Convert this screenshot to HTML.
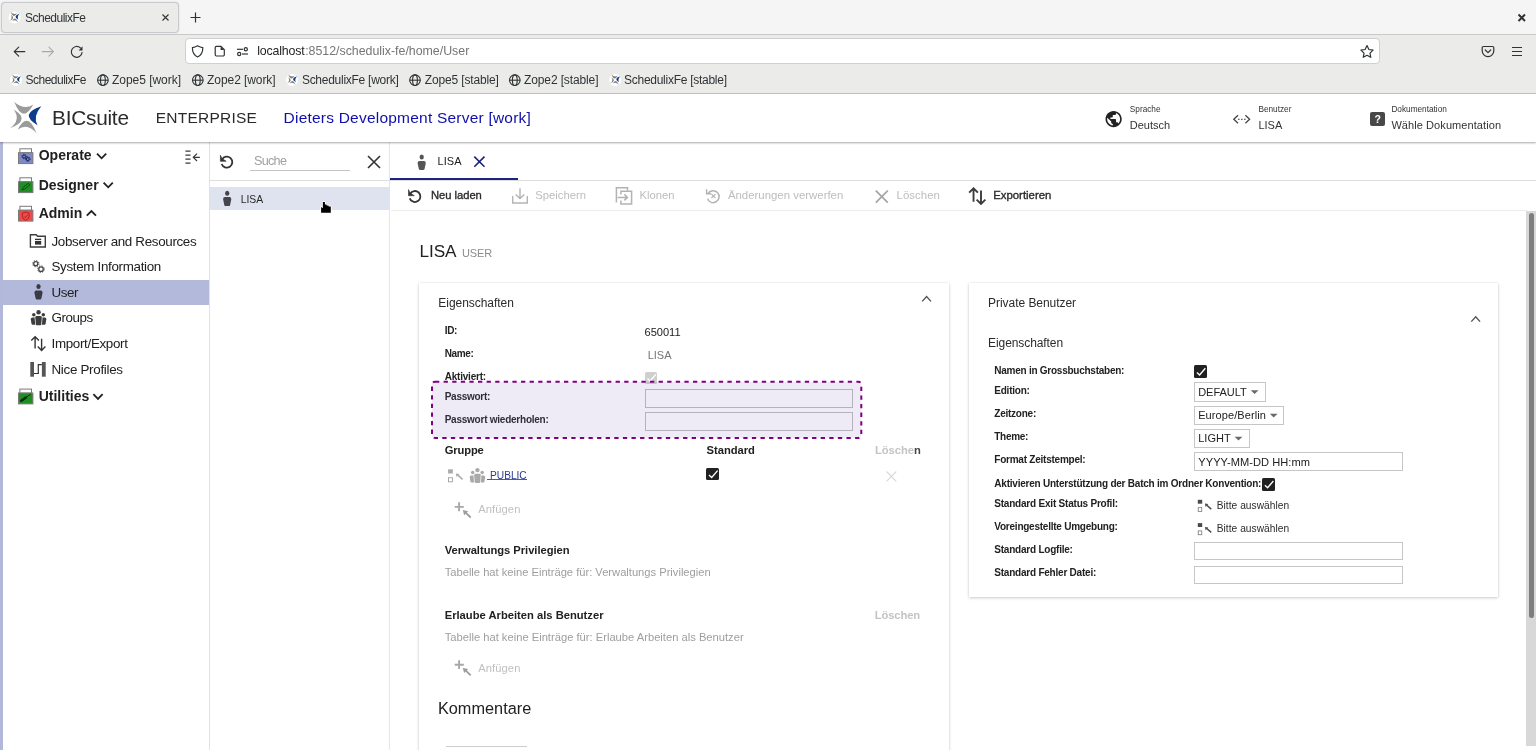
<!DOCTYPE html>
<html>
<head>
<meta charset="utf-8">
<title>SchedulixFe</title>
<style>
*{box-sizing:border-box;margin:0;padding:0}
html,body{width:1536px;height:750px;overflow:hidden;background:#fff}
body{font-family:"Liberation Sans",sans-serif;color:#212121;position:relative}
.t{position:absolute;white-space:pre;line-height:1}
.b{position:absolute}
#root{position:absolute;left:0;top:0;width:1536px;height:750px;overflow:hidden;will-change:transform}
svg.ov{position:absolute;left:0;top:0;width:1536px;height:750px;overflow:visible}
a{color:inherit}
</style>
</head>
<body>
<div id="root">
<!-- boxes -->
<div class="b" style="left:0px;top:0px;width:1536px;height:35px;background:#f5f5f5"></div>
<div class="b" style="left:0px;top:34px;width:1536px;height:1px;background:#c9c9c9"></div>
<div class="b" style="left:1px;top:2px;width:178px;height:30.5px;background:#ebebea;border:1px solid #c9c9ce;border-radius:4px;box-shadow:0 0 1.5px rgba(0,0,20,.18)"></div>
<div class="b" style="left:0px;top:35px;width:1536px;height:59px;background:#ebebea"></div>
<div class="b" style="left:0px;top:93px;width:1536px;height:1px;background:#c4c4c4"></div>
<div class="b" style="left:185px;top:38px;width:1195px;height:26px;background:#fff;border:1px solid #d0d0d0;border-radius:4px"></div>
<div class="b" style="left:0px;top:142px;width:3px;height:608px;background:#b2b8da"></div>
<div class="b" style="left:209px;top:142px;width:1px;height:608px;background:#e2e2e2"></div>
<div class="b" style="left:3px;top:279.5px;width:206px;height:25.2px;background:#b3b9da"></div>
<div class="b" style="left:389px;top:142px;width:1px;height:608px;background:#e6e6e6"></div>
<div class="b" style="left:210px;top:180px;width:1326px;height:1px;background:#dedede"></div>
<div class="b" style="left:210px;top:187.3px;width:180px;height:22.3px;background:#dfe3ef"></div>
<div class="b" style="left:249.8px;top:170px;width:100px;height:1px;background:#c4c4c4"></div>
<div class="b" style="left:390px;top:178px;width:128px;height:2.4px;background:#1a237e"></div>
<div class="b" style="left:391px;top:210px;width:1136px;height:1px;background:#ececec"></div>
<div class="b" style="left:1526.3px;top:210.5px;width:9.7px;height:535.5px;background:#d8d8d8"></div>
<div class="b" style="left:1528.6px;top:212.5px;width:5.2px;height:405.4px;background:#7d7d7d;border-radius:3px"></div>
<div class="b" style="left:0px;top:94px;width:1536px;height:48px;background:#fff;box-shadow:0 1px 2px rgba(0,0,0,.35)"></div>
<div class="b" style="left:1370.2px;top:112px;width:14.8px;height:14.2px;background:#484848;border-radius:2px"></div>
<div class="b" style="left:419px;top:283px;width:530.3px;height:480px;background:#fff;box-shadow:0 1px 3px rgba(0,0,0,.2),0 0 1.5px rgba(0,0,0,.1)"></div>
<div class="b" style="left:969px;top:283px;width:529.4px;height:313.5px;background:#fff;box-shadow:0 1px 3px rgba(0,0,0,.2),0 0 1.5px rgba(0,0,0,.1)"></div>
<div class="b" style="left:645px;top:371.5px;width:12.4px;height:12.4px;background:#cfcfcf;border-radius:1.5px"></div>
<div class="b" style="left:645px;top:389px;width:208px;height:19px;background:#fff;border:1px solid #bdbdbd"></div>
<div class="b" style="left:645px;top:412.2px;width:208px;height:19.3px;background:#fff;border:1px solid #bdbdbd"></div>
<div class="b" style="left:487.4px;top:479.4px;width:39.5px;height:0.9px;background:#4b59ad"></div>
<div class="b" style="left:706.4px;top:467.6px;width:12.9px;height:12.9px;background:#212121;border-radius:1.5px"></div>
<div class="b" style="left:446.4px;top:746px;width:81px;height:1px;background:#cdcdcd"></div>
<div class="b" style="left:1194.4px;top:365.3px;width:12.6px;height:12.6px;background:#212121;border-radius:1.5px"></div>
<div class="b" style="left:1194px;top:382.4px;width:72px;height:19.2px;background:#fff;border:1px solid #c6c6c6"></div>
<div class="b" style="left:1194px;top:406px;width:90px;height:18.8px;background:#fff;border:1px solid #c6c6c6"></div>
<div class="b" style="left:1194px;top:429px;width:55.8px;height:18.8px;background:#fff;border:1px solid #c6c6c6"></div>
<div class="b" style="left:1194px;top:452px;width:208.5px;height:19px;background:#fff;border:1px solid #c6c6c6"></div>
<div class="b" style="left:1262.4px;top:478.1px;width:12.6px;height:12.6px;background:#212121;border-radius:1.5px"></div>
<div class="b" style="left:1194px;top:542.3px;width:208.5px;height:18.2px;background:#fff;border:1px solid #c6c6c6"></div>
<div class="b" style="left:1194px;top:565.5px;width:208.5px;height:18.4px;background:#fff;border:1px solid #c6c6c6"></div>
<!-- text -->
<div class="t" style="left:25.00px;top:12px;font-size:12px;color:#2e3436;letter-spacing:-0.504px;">SchedulixFe</div>
<div class="t" style="left:257.20px;top:45px;font-size:12.4px;color:#1e1e1e;letter-spacing:-0.168px;">localhost</div>
<div class="t" style="left:305.20px;top:45px;font-size:12.4px;color:#757575;letter-spacing:-0.020px;">:8512/schedulix-fe/home/User</div>
<div class="t" style="left:25.50px;top:74px;font-size:12px;color:#2e3436;letter-spacing:-0.504px;">SchedulixFe</div>
<div class="t" style="left:112.00px;top:74px;font-size:12px;color:#2e3436;letter-spacing:-0.033px;">Zope5 [work]</div>
<div class="t" style="left:207.10px;top:74px;font-size:12px;color:#2e3436;letter-spacing:-0.079px;">Zope2 [work]</div>
<div class="t" style="left:301.90px;top:74px;font-size:12px;color:#2e3436;letter-spacing:-0.263px;">SchedulixFe [work]</div>
<div class="t" style="left:424.80px;top:74px;font-size:12px;color:#2e3436;letter-spacing:-0.158px;">Zope5 [stable]</div>
<div class="t" style="left:524.00px;top:74px;font-size:12px;color:#2e3436;letter-spacing:-0.119px;">Zope2 [stable]</div>
<div class="t" style="left:624.00px;top:74px;font-size:12px;color:#2e3436;letter-spacing:-0.266px;">SchedulixFe [stable]</div>
<div class="t" style="left:52.00px;top:108px;font-size:20.8px;color:#2a2a2a;letter-spacing:-0.230px;">BICsuite</div>
<div class="t" style="left:155.80px;top:110px;font-size:15.5px;color:#2a2a2a;letter-spacing:0.228px;">ENTERPRISE</div>
<div class="t" style="left:283.60px;top:110px;font-size:15.5px;color:#0f0fac;letter-spacing:0.215px;">Dieters Development Server [work]</div>
<div class="t" style="left:1129.80px;top:106px;font-size:8.25px;color:#333;">Sprache</div>
<div class="t" style="left:1129.80px;top:120px;font-size:11px;color:#333;">Deutsch</div>
<div class="t" style="left:1258.40px;top:106px;font-size:8.25px;color:#333;">Benutzer</div>
<div class="t" style="left:1258.40px;top:120px;font-size:11px;color:#333;">LISA</div>
<div class="t" style="left:1391.40px;top:106px;font-size:8.25px;color:#333;">Dokumentation</div>
<div class="t" style="left:1391.40px;top:120px;font-size:11px;color:#333;letter-spacing:0.077px;">Wähle Dokumentation</div>
<div class="t" style="left:38.70px;top:148px;font-size:14px;font-weight:bold;">Operate</div>
<div class="t" style="left:38.70px;top:178px;font-size:14px;font-weight:bold;">Designer</div>
<div class="t" style="left:38.70px;top:206px;font-size:14px;font-weight:bold;">Admin</div>
<div class="t" style="left:38.70px;top:389px;font-size:14px;font-weight:bold;">Utilities</div>
<div class="t" style="left:51.50px;top:235px;font-size:13.4px;letter-spacing:-0.337px;">Jobserver and Resources</div>
<div class="t" style="left:51.50px;top:260px;font-size:13.4px;letter-spacing:-0.329px;">System Information</div>
<div class="t" style="left:51.50px;top:286px;font-size:13.4px;letter-spacing:-0.457px;">User</div>
<div class="t" style="left:51.50px;top:311px;font-size:13.4px;letter-spacing:-0.426px;">Groups</div>
<div class="t" style="left:51.50px;top:337px;font-size:13.4px;letter-spacing:-0.325px;">Import/Export</div>
<div class="t" style="left:51.50px;top:363px;font-size:13.4px;letter-spacing:-0.304px;">Nice Profiles</div>
<div class="t" style="left:253.90px;top:155px;font-size:12.6px;color:#a0a0a0;letter-spacing:-0.657px;">Suche</div>
<div class="t" style="left:240.70px;top:195px;font-size:10.4px;color:#2a2a2a;">LISA</div>
<div class="t" style="left:437.50px;top:156px;font-size:11px;letter-spacing:0.051px;">LISA</div>
<div class="t" style="left:430.90px;top:190px;font-size:11.2px;color:#2b2b2b;letter-spacing:-0.008px;-webkit-text-stroke:0.35px #2b2b2b;">Neu laden</div>
<div class="t" style="left:535.20px;top:190px;font-size:11.3px;color:#bdbdbd;letter-spacing:-0.010px;">Speichern</div>
<div class="t" style="left:639.60px;top:190px;font-size:11.3px;color:#bdbdbd;letter-spacing:-0.037px;">Klonen</div>
<div class="t" style="left:727.90px;top:190px;font-size:11.4px;color:#bdbdbd;letter-spacing:0.008px;">Änderungen verwerfen</div>
<div class="t" style="left:896.60px;top:190px;font-size:11.4px;color:#bdbdbd;letter-spacing:0.033px;">Löschen</div>
<div class="t" style="left:993.20px;top:190px;font-size:11.4px;color:#2b2b2b;letter-spacing:-0.010px;-webkit-text-stroke:0.35px #2b2b2b;">Exportieren</div>
<div class="t" style="left:1374.60px;top:114px;font-size:10.5px;font-weight:bold;color:#fff;">?</div>
<div class="t" style="left:419.50px;top:243px;font-size:17.2px;letter-spacing:-0.096px;">LISA</div>
<div class="t" style="left:462.10px;top:248px;font-size:11px;color:#8c8c8c;letter-spacing:-0.187px;">USER</div>
<div class="t" style="left:438.30px;top:297px;font-size:12px;color:#2b2b2b;letter-spacing:-0.038px;">Eigenschaften</div>
<div class="t" style="left:444.70px;top:326px;font-size:10px;font-weight:bold;letter-spacing:-0.293px;">ID:</div>
<div class="t" style="left:444.70px;top:349px;font-size:10px;font-weight:bold;letter-spacing:-0.336px;">Name:</div>
<div class="t" style="left:444.70px;top:372px;font-size:10px;font-weight:bold;letter-spacing:-0.212px;">Aktiviert:</div>
<div class="t" style="left:444.70px;top:392px;font-size:10px;font-weight:bold;letter-spacing:-0.263px;">Passwort:</div>
<div class="t" style="left:444.70px;top:415px;font-size:10px;font-weight:bold;letter-spacing:-0.240px;">Passwort wiederholen:</div>
<div class="t" style="left:644.60px;top:327px;font-size:11.1px;letter-spacing:-0.043px;">650011</div>
<div class="t" style="left:647.70px;top:350px;font-size:11px;color:#757575;">LISA</div>
<div class="t" style="left:444.70px;top:445px;font-size:11.2px;font-weight:bold;letter-spacing:-0.125px;">Gruppe</div>
<div class="t" style="left:706.60px;top:445px;font-size:11.2px;font-weight:bold;letter-spacing:-0.020px;">Standard</div>
<div class="t" style="left:874.90px;top:445px;font-size:11.2px;font-weight:bold;color:#c4c4c4;">Lösche<span style="color:#444">n</span></div>
<div class="t" style="left:490.10px;top:471px;font-size:10.2px;color:#2d3a94;letter-spacing:-0.049px;">PUBLIC</div>
<div class="t" style="left:478.30px;top:504px;font-size:11.2px;color:#c0c0c0;letter-spacing:0.062px;">Anfügen</div>
<div class="t" style="left:444.70px;top:545px;font-size:11.2px;font-weight:bold;letter-spacing:-0.033px;">Verwaltungs Privilegien</div>
<div class="t" style="left:444.70px;top:567px;font-size:11.2px;color:#9e9e9e;letter-spacing:-0.015px;">Tabelle hat keine Einträge für: Verwaltungs Privilegien</div>
<div class="t" style="left:444.70px;top:610px;font-size:11.2px;font-weight:bold;letter-spacing:0.003px;">Erlaube Arbeiten als Benutzer</div>
<div class="t" style="left:874.70px;top:610px;font-size:11.2px;font-weight:bold;color:#c4c4c4;letter-spacing:-0.092px;">Löschen</div>
<div class="t" style="left:444.70px;top:632px;font-size:11.2px;color:#9e9e9e;letter-spacing:-0.003px;">Tabelle hat keine Einträge für: Erlaube Arbeiten als Benutzer</div>
<div class="t" style="left:478.30px;top:663px;font-size:11.2px;color:#c0c0c0;letter-spacing:0.062px;">Anfügen</div>
<div class="t" style="left:437.90px;top:700px;font-size:16.3px;letter-spacing:0.021px;">Kommentare</div>
<div class="t" style="left:988.10px;top:297px;font-size:12px;color:#2b2b2b;letter-spacing:-0.047px;">Private Benutzer</div>
<div class="t" style="left:988.10px;top:337px;font-size:12px;color:#2b2b2b;letter-spacing:-0.088px;">Eigenschaften</div>
<div class="t" style="left:994.30px;top:366px;font-size:10px;font-weight:bold;letter-spacing:-0.250px;">Namen in Grossbuchstaben:</div>
<div class="t" style="left:994.30px;top:386px;font-size:10px;font-weight:bold;letter-spacing:-0.234px;">Edition:</div>
<div class="t" style="left:994.30px;top:409px;font-size:10px;font-weight:bold;letter-spacing:-0.241px;">Zeitzone:</div>
<div class="t" style="left:994.30px;top:432px;font-size:10px;font-weight:bold;letter-spacing:-0.313px;">Theme:</div>
<div class="t" style="left:994.30px;top:455px;font-size:10px;font-weight:bold;letter-spacing:-0.234px;">Format Zeitstempel:</div>
<div class="t" style="left:994.30px;top:479px;font-size:10px;font-weight:bold;letter-spacing:-0.224px;">Aktivieren Unterstützung der Batch im Ordner Konvention:</div>
<div class="t" style="left:994.30px;top:499px;font-size:10px;font-weight:bold;letter-spacing:-0.211px;">Standard Exit Status Profil:</div>
<div class="t" style="left:994.30px;top:522px;font-size:10px;font-weight:bold;letter-spacing:-0.237px;">Voreingestellte Umgebung:</div>
<div class="t" style="left:994.30px;top:545px;font-size:10px;font-weight:bold;letter-spacing:-0.226px;">Standard Logfile:</div>
<div class="t" style="left:994.30px;top:568px;font-size:10px;font-weight:bold;letter-spacing:-0.224px;">Standard Fehler Datei:</div>
<div class="t" style="left:1198.20px;top:387px;font-size:11px;letter-spacing:-0.016px;">DEFAULT</div>
<div class="t" style="left:1198.20px;top:410px;font-size:11px;letter-spacing:0.087px;">Europe/Berlin</div>
<div class="t" style="left:1198.20px;top:433px;font-size:11px;letter-spacing:0.027px;">LIGHT</div>
<div class="t" style="left:1198.30px;top:457px;font-size:11.1px;letter-spacing:0.033px;">YYYY-MM-DD HH:mm</div>
<div class="t" style="left:1216.70px;top:501px;font-size:10.2px;color:#2b2b2b;letter-spacing:0.042px;">Bitte auswählen</div>
<div class="t" style="left:1216.70px;top:524px;font-size:10.2px;color:#2b2b2b;letter-spacing:0.042px;">Bitte auswählen</div>
<!-- icons -->
<svg class="ov" viewBox="0 0 1536 750">
<defs>
<g id="logo">
<path fill="#9b9b9b" d="M14.3,101.9 Q24.2,110.6 33.3,104.5 Q23,124 14.3,101.9 Z"/>
<path fill="#9b9b9b" d="M13.7,109.5 Q31.4,120.1 9.9,128.3 Q21.4,120.1 13.7,109.5 Z"/>
<path fill="#9b9b9b" d="M17.8,129.5 Q27.8,110.25 36.6,133.6 Q27.8,122.65 17.8,129.5 Z"/>
<path fill="#0c3c8c" d="M41.3,106.3 Q18.4,113.8 37.5,125.3 Q32.6,116.2 41.3,106.3 Z"/>
</g>
<g id="fav"><circle cx="0" cy="0" r="6" fill="#fff"/><g transform="scale(0.32) translate(-25.6,-117.75)">
<path fill="#7e7e7e" d="M14.3,101.9 Q24.2,110.6 33.3,104.5 Q23,124 14.3,101.9 Z"/>
<path fill="#7e7e7e" d="M13.7,109.5 Q31.4,120.1 9.9,128.3 Q21.4,120.1 13.7,109.5 Z"/>
<path fill="#7e7e7e" d="M17.8,129.5 Q27.8,110.25 36.6,133.6 Q27.8,122.65 17.8,129.5 Z"/>
<path fill="#0c3c8c" d="M41.3,106.3 Q18.4,113.8 37.5,125.3 Q32.6,116.2 41.3,106.3 Z"/></g></g>
<g id="globe" fill="none" stroke="#2e3436" stroke-width="1.1"><circle cx="0" cy="0" r="5.3"/><ellipse cx="0" cy="0" rx="2.4" ry="5.3"/><path d="M-5.3,0 H5.3"/></g>
</defs>
<use href="#fav" x="14.5" y="17.4"/>
<use href="#fav" x="15.9" y="79.9"/>
<use href="#fav" x="292" y="79.9"/>
<use href="#fav" x="615.2" y="79.9"/>
<use href="#globe" x="102.9" y="80.2"/>
<use href="#globe" x="197.8" y="80.2"/>
<use href="#globe" x="415" y="80.2"/>
<use href="#globe" x="514.8" y="80.2"/>
<path d="M162.5,14.5 l6,6 m0,-6 l-6,6" stroke="#2e3436" stroke-width="1.1" fill="none"/>
<path d="M190.5,17.5 h10 m-5,-5 v10" stroke="#2e3436" stroke-width="1.2" fill="none"/>
<path d="M1518.5,14.5 l6.5,6.5 m0,-6.5 l-6.5,6.5" stroke="#2e3436" stroke-width="2" fill="none"/>
<path d="M24.8,51.6 H14.3 m4.4,-4.5 l-4.5,4.5 l4.5,4.5" stroke="#2e3436" stroke-width="1.15" fill="none" stroke-linecap="round" stroke-linejoin="round"/>
<path d="M42.3,51.6 H53.3 m-4.4,-4.5 l4.5,4.5 l-4.5,4.5" stroke="#a9a9a9" stroke-width="1.05" fill="none" stroke-linecap="round" stroke-linejoin="round"/>
<path d="M80.4,47.9 A5.4,5.4 0 1 0 82.05,52.7" stroke="#2e3436" stroke-width="1.2" fill="none" stroke-linecap="round"/><path d="M82.5,46.3 V50.4 H78.6 Z" fill="#2e3436"/>
<path d="M197.6,45.8 C199.5,47 201.2,47.5 202.8,47.6 C202.9,52 201.5,55.2 197.6,57 C193.7,55.2 192.3,52 192.4,47.6 C194,47.5 195.7,47 197.6,45.8 Z" stroke="#2e3436" stroke-width="1.2" fill="none" stroke-linejoin="round"/>
<path d="M216.4,46.3 h4.6 l3.3,3.3 v5.2 a1.2,1.2 0 0 1 -1.2,1.2 h-6.7 a1.2,1.2 0 0 1 -1.2,-1.2 v-7.3 a1.2,1.2 0 0 1 1.2,-1.2 Z" stroke="#2e3436" stroke-width="1.2" fill="none" stroke-linejoin="round"/><path d="M220.6,46.3 v3.6 h3.7 Z" fill="#2e3436"/>
<g stroke="#2e3436" stroke-width="1.2" fill="none"><path d="M237,49.3 h6"/><circle cx="245.8" cy="49.3" r="1.6"/><path d="M248,54 h-6"/><circle cx="239.2" cy="54" r="1.6"/></g>
<path d="M1367,45.6 l1.9,3.9 l4.2,0.6 l-3.1,3 l0.75,4.2 l-3.75,-2 l-3.75,2 l0.75,-4.2 l-3.1,-3 l4.2,-0.6 Z" stroke="#2e3436" stroke-width="1.2" fill="none" stroke-linejoin="round"/>
<path d="M1483.5,46.5 h9 a1.3,1.3 0 0 1 1.3,1.3 v3 a5.8,5.8 0 0 1 -11.6,0 v-3 a1.3,1.3 0 0 1 1.3,-1.3 Z" stroke="#2e3436" stroke-width="1.2" fill="none"/><path d="M1485.3,50 l2.7,2.6 l2.7,-2.6" stroke="#2e3436" stroke-width="1.2" fill="none" stroke-linecap="round" stroke-linejoin="round"/>
<path d="M1512,47.5 h10 M1512,51.5 h10 M1512,55.5 h10" stroke="#2e3436" stroke-width="1.2" fill="none"/>
<use href="#logo"/>
<g><rect x="19.9" y="148.8" width="11.6" height="4" fill="#fff" stroke="#7a7a7a" stroke-width="1"/><rect x="18.5" y="152.70000000000002" width="14.4" height="10.9" fill="#7d8ac4" stroke="#7a7a7a" stroke-width="1"/><g fill="none" stroke="#1a2060" stroke-width="1"><circle cx="24.099999999999998" cy="156.5" r="1.5"/><circle cx="27.799999999999997" cy="159.10000000000002" r="1.5"/></g><g fill="none" stroke="#1a2060" stroke-width="1" stroke-dasharray="0.9 0.9"><circle cx="24.099999999999998" cy="156.5" r="2.3"/><circle cx="27.799999999999997" cy="159.10000000000002" r="2.3"/></g></g>
<g><rect x="19.9" y="177.8" width="11.6" height="4" fill="#fff" stroke="#7a7a7a" stroke-width="1"/><rect x="18.5" y="181.70000000000002" width="14.4" height="10.9" fill="#1f8f22" stroke="#7a7a7a" stroke-width="1"/><path d="M21.9,189.9 l1.4,-2.6 l5,-4 l1.6,1.6 l-5.2,4.2 Z" fill="none" stroke="#0c4a0e" stroke-width="0.9"/></g>
<g><rect x="19.9" y="206.3" width="11.6" height="4" fill="#fff" stroke="#7a7a7a" stroke-width="1"/><rect x="18.5" y="210.20000000000002" width="14.4" height="10.9" fill="#ef4b4b" stroke="#7a7a7a" stroke-width="1"/><g fill="none" stroke="#a31515" stroke-width="0.8"><path d="M25.7,212.0 l3.4,1.2 q0.6,3.6 -1,5.6 l-2.4,1.5 l-2.4,-1.5 q-1.6,-2 -1,-5.6 Z"/><path d="M24.099999999999998,216.4 l1.2,1.3 l2.4,-2.8"/></g></g>
<g><rect x="19.9" y="389.1" width="11.6" height="4" fill="#fff" stroke="#7a7a7a" stroke-width="1"/><rect x="18.5" y="393.0" width="14.4" height="10.9" fill="#1f8f22" stroke="#7a7a7a" stroke-width="1"/><path d="M21.299999999999997,400.8 l4.6,-3.3" stroke="#0b2a0c" stroke-width="2.4" fill="none" stroke-linecap="round"/><path d="M25.9,397.5 l4.8,-3.3" stroke="#0b2a0c" stroke-width="1" fill="none"/></g>
<path d="M97,153.6 l4.6,4.7 l4.6,-4.7" fill="none" stroke="#212121" stroke-width="1.8"/>
<path d="M103.6,182.6 l4.6,4.7 l4.6,-4.7" fill="none" stroke="#212121" stroke-width="1.8"/>
<path d="M86.8,215.7 l4.6,-4.7 l4.6,4.7" fill="none" stroke="#212121" stroke-width="1.8"/>
<path d="M93.4,394.2 l4.6,4.7 l4.6,-4.7" fill="none" stroke="#212121" stroke-width="1.8"/>
<g stroke="#3a3a3a" fill="none"><path d="M185.4,151.1 h5.1 M185.4,155.2 h5.1 M185.4,159.2 h5.1 M185.4,163.2 h5.1" stroke-width="1.3"/><path d="M199.9,157.3 h-6.6 m3.7,-3.7 l-3.7,3.7 l3.7,3.7" stroke-width="1.2"/></g>
<path d="M30.4,234.7 h5.8 l1.4,1.5 h7.7 v10.8 h-14.9 Z" fill="none" stroke="#3c3c3c" stroke-width="1.4"/><rect x="35" y="238.7" width="6.2" height="1.4" fill="#333"/><rect x="35" y="241" width="6.2" height="3.6" fill="#333"/>
<g fill="none" stroke="#444"><circle cx="35.8" cy="263.7" r="2.05" stroke-width="1.3"/><circle cx="35.8" cy="263.7" r="3.15" stroke-width="0.9" stroke-dasharray="1.237 1.237"/></g>
<g fill="none" stroke="#444"><circle cx="41" cy="269.2" r="2.25" stroke-width="1.3"/><circle cx="41" cy="269.2" r="3.35" stroke-width="0.9" stroke-dasharray="1.316 1.316"/></g>
<g fill="#3a3a44"><ellipse cx="38.5" cy="286.60" rx="2.15" ry="2.50"/><path d="M36.30,290.50 Q34.40,290.50 34.40,292.70 L35.60,298.30 Q35.80,299.50 36.90,299.50 L40.10,299.50 Q41.20,299.50 41.40,298.30 L42.60,292.70 Q42.60,290.50 40.70,290.50 Z"/></g>
<g fill="#3d3d3d"><circle cx="38.55" cy="312.3" r="2.2"/><circle cx="33.8" cy="314.7" r="1.75"/><circle cx="43.3" cy="314.7" r="1.75"/><path d="M35.3,317.4 q0,-1.4 1.4,-1.4 h3.7 q1.4,0 1.4,1.4 l-0.5,6.9 q-0.1,1 -1.1,1 h-3.3 q-1,0 -1.1,-1 Z"/><path d="M30.8,319.2 q0,-1.6 1.5,-1.6 h2.3 l0.6,7.2 h-2.6 q-0.9,0 -1.1,-1 Z"/><path d="M46.3,319.2 q0,-1.6 -1.5,-1.6 h-2.3 l-0.6,7.2 h2.6 q0.9,0 1.1,-1 Z"/></g>
<g fill="none" stroke="#333" stroke-width="1.4"><path d="M35.1,348.59999999999997 V336.8 M31.299999999999997,340.59999999999997 l3.8,-3.8 l3.8,3.8"/><path d="M41.599999999999994,338.8 V350.4 M37.8,346.59999999999997 l3.8,3.8 l3.8,-3.8"/></g>
<rect x="30.3" y="362" width="3.7" height="14.7" fill="#555"/><rect x="41.9" y="362" width="3.8" height="14.7" fill="#555"/><path d="M34,373.5 h4.3 v-8.8 h3.6" fill="none" stroke="#333" stroke-width="1.2"/>
<g fill="none" stroke="#333" stroke-width="1.8"><path d="M222.04,159.35 A5.5,5.5 0 1 1 221.63,163.98"/></g><path d="M220.40,155.20 V161.30 H226.20 L223.60,159.60 L222.00,158.60 Z" fill="#333" stroke="#333" stroke-width="0.6" stroke-linejoin="round"/>
<path d="M368,156 l12,12 m0,-12 l-12,12" stroke="#333" stroke-width="1.6" fill="none"/>
<g fill="#44444a"><ellipse cx="227.2" cy="193.20" rx="2.15" ry="2.50"/><path d="M225.00,197.10 Q223.10,197.10 223.10,199.30 L224.30,204.90 Q224.50,206.10 225.60,206.10 L228.80,206.10 Q229.90,206.10 230.10,204.90 L231.30,199.30 Q231.30,197.10 229.40,197.10 Z"/></g>
<path d="M322.85,202 H324.9 V204.5 H326.6 V205.5 H328.6 V206.5 H330.8 V212.7 H321.1 V207 L322.85,208.2 Z" fill="#000" stroke="#fff" stroke-width="1.6" stroke-linejoin="round" paint-order="stroke"/>
<g fill="#555"><ellipse cx="421.7" cy="157.10" rx="2.15" ry="2.50"/><path d="M419.50,161.00 Q417.60,161.00 417.60,163.20 L418.80,168.80 Q419.00,170.00 420.10,170.00 L423.30,170.00 Q424.40,170.00 424.60,168.80 L425.80,163.20 Q425.80,161.00 423.90,161.00 Z"/></g>
<path d="M474.3,156.6 l10.2,10.2 m0,-10.2 l-10.2,10.2" stroke="#1a237e" stroke-width="1.6" fill="none"/>
<g fill="none" stroke="#333" stroke-width="1.8"><path d="M410.14,193.75 A5.5,5.5 0 1 1 409.73,198.38"/></g><path d="M408.50,189.60 V195.70 H414.30 L411.70,194.00 L410.10,193.00 Z" fill="#333" stroke="#333" stroke-width="0.6" stroke-linejoin="round"/>
<g fill="none" stroke="#b4b4b4" stroke-width="1.4"><path d="M512.7,196 v7 h14.6 v-7"/><path d="M520,188.2 v10.2 m-4.3,-4 l4.3,4.2 l4.3,-4.2"/></g>
<g fill="none" stroke="#b2b2b2" stroke-width="1.5"><path d="M616.4,202.4 V187.8 H627.5 V190.4"/><path d="M620.9,194.6 V191.2 H631.6 V204 H620.9 V200.4"/><path d="M617.6,197.4 h9.8 m-3,-3 l3,3 l-3,3"/></g>
<g fill="none" stroke="#b2b2b2" stroke-width="1.5"><path d="M708.2,193.2 A6,6 0 1 1 707.5,198.8"/><path d="M706.6,189.2 v4.6 h4.6"/><path d="M711.4,194.2 l4,4 m0,-4 l-4,4" stroke-width="1.2"/></g>
<path d="M875.8,190.6 l12,12 m0,-12 l-12,12" stroke="#a6a6a6" stroke-width="1.8" fill="none"/>
<g fill="none" stroke="#3c3c3c" stroke-width="1.9"><path d="M973.5300000000001,201.85999999999999 V188.29 M969.1600000000001,192.66 l4.369999999999999,-4.369999999999999 l4.369999999999999,4.369999999999999"/><path d="M981.005,190.59 V203.93 M976.635,199.56 l4.369999999999999,4.369999999999999 l4.369999999999999,-4.369999999999999"/></g>
<path transform="translate(1103.9,109.4) scale(0.81)" fill="#222" d="M12 2C6.48 2 2 6.48 2 12s4.48 10 10 10 10-4.48 10-10S17.52 2 12 2zm-1 17.93c-3.95-.49-7-3.85-7-7.93 0-.62.08-1.21.21-1.79L9 15v1c0 1.1.9 2 2 2v1.93zm6.9-2.54c-.26-.81-1-1.39-1.9-1.39h-1v-3c0-.55-.45-1-1-1H8v-2h2c.55 0 1-.45 1-1V7h2c1.1 0 2-.9 2-2v-.41c2.93 1.19 5 4.06 5 7.41 0 2.08-.8 3.97-2.1 5.39z"/>
<g fill="none" stroke="#444" stroke-width="1.3"><path d="M1238,115.3 l-4.2,4 l4.2,4"/><path d="M1245.4,115.3 l4.2,4 l-4.2,4"/></g><g fill="#444"><rect x="1238.2" y="118.7" width="1.3" height="1.3"/><rect x="1241.2" y="118.7" width="1.3" height="1.3"/><rect x="1244.2" y="118.7" width="1.3" height="1.3"/></g>
<path d="M922.2,301.40000000000003 l4.4,-4.8 l4.4,4.8" fill="none" stroke="#555" stroke-width="1.4"/>
<path d="M647.48,378.57 L650.08,381.05 L655.79,374.35" fill="none" stroke="#fff" stroke-width="1.35"/>
<g><rect x="448.1" y="469.3" width="4.75" height="4.21" fill="#ababab"/><rect x="448.55" y="477.72" width="3.85" height="4.10" fill="none" stroke="#a0a0a0" stroke-width="0.9"/><path d="M462.57,479.34 L457.82,475.13" stroke="#ababab" stroke-width="1.5" fill="none"/><path d="M455.88,473.40 l3.67,0.54 l-3.13,3.13 Z" fill="#ababab"/></g>
<g fill="#aaaaaa"><circle cx="477.45000000000005" cy="470.1" r="2.2"/><circle cx="472.70000000000005" cy="472.5" r="1.75"/><circle cx="482.20000000000005" cy="472.5" r="1.75"/><path d="M474.20000000000005,475.2 q0,-1.4 1.4,-1.4 h3.7 q1.4,0 1.4,1.4 l-0.5,6.9 q-0.1,1 -1.1,1 h-3.3 q-1,0 -1.1,-1 Z"/><path d="M469.70000000000005,477.0 q0,-1.6 1.5,-1.6 h2.3 l0.6,7.2 h-2.6 q-0.9,0 -1.1,-1 Z"/><path d="M485.20000000000005,477.0 q0,-1.6 -1.5,-1.6 h-2.3 l-0.6,7.2 h2.6 q0.9,0 1.1,-1 Z"/></g>
<path d="M708.98,474.95 L711.69,477.53 L717.62,470.57" fill="none" stroke="#fff" stroke-width="1.35"/>
<path d="M886.5,471.5 l9.8,9.8 m0,-9.8 l-9.8,9.8" stroke="#d8d8d8" stroke-width="1.1" fill="none"/>
<g fill="none"><path d="M454.7,506.9 h9.1 M459.09999999999997,502.3 v8.9" stroke="#a8a8a8" stroke-width="1.9"/><path d="M470.7,517.5 l-5.4,-5.2" stroke="#9c9c9c" stroke-width="1.8"/></g><path d="M462.8,510.0 l5.3,1.2 l-4,4 Z" fill="#9c9c9c"/>
<g fill="none"><path d="M454.7,664.8000000000001 h9.1 M459.09999999999997,660.2 v8.9" stroke="#a8a8a8" stroke-width="1.9"/><path d="M470.7,675.4 l-5.4,-5.2" stroke="#9c9c9c" stroke-width="1.8"/></g><path d="M462.8,667.9 l5.3,1.2 l-4,4 Z" fill="#9c9c9c"/>
<path d="M1471.3,321.6 l4.4,-4.8 l4.4,4.8" fill="none" stroke="#555" stroke-width="1.4"/>
<path d="M1196.92,372.48 L1199.57,375.00 L1205.36,368.20" fill="none" stroke="#fff" stroke-width="1.35"/>
<path d="M1250.7,390.3 h7.8 l-3.9,3.7 Z" fill="#6a6a6a"/>
<path d="M1269.8,413.7 h7.8 l-3.9,3.7 Z" fill="#6a6a6a"/>
<path d="M1234.6,436.7 h7.8 l-3.9,3.7 Z" fill="#6a6a6a"/>
<path d="M1264.92,485.28 L1267.57,487.80 L1273.36,481.00" fill="none" stroke="#fff" stroke-width="1.35"/>
<g><rect x="1197.8" y="499.8" width="4.40" height="3.90" fill="#4a4a4a"/><rect x="1198.25" y="507.60" width="3.50" height="3.80" fill="none" stroke="#858585" stroke-width="0.9"/><path d="M1211.20,509.10 L1206.80,505.20" stroke="#4a4a4a" stroke-width="1.5" fill="none"/><path d="M1205.00,503.60 l3.40,0.50 l-2.90,2.90 Z" fill="#4a4a4a"/></g>
<g><rect x="1197.8" y="523.1" width="4.40" height="3.90" fill="#4a4a4a"/><rect x="1198.25" y="530.90" width="3.50" height="3.80" fill="none" stroke="#858585" stroke-width="0.9"/><path d="M1211.20,532.40 L1206.80,528.50" stroke="#4a4a4a" stroke-width="1.5" fill="none"/><path d="M1205.00,526.90 l3.40,0.50 l-2.90,2.90 Z" fill="#4a4a4a"/></g>
</svg>
<!-- overlays -->
<svg class="ov" viewBox="0 0 1536 750"><rect x="432" y="381.7" width="429.3" height="56.2" rx="3" fill="rgba(138,120,200,0.15)" stroke="#800080" stroke-width="2" stroke-dasharray="4.3 4.3"/></svg>
</div>
</body>
</html>
